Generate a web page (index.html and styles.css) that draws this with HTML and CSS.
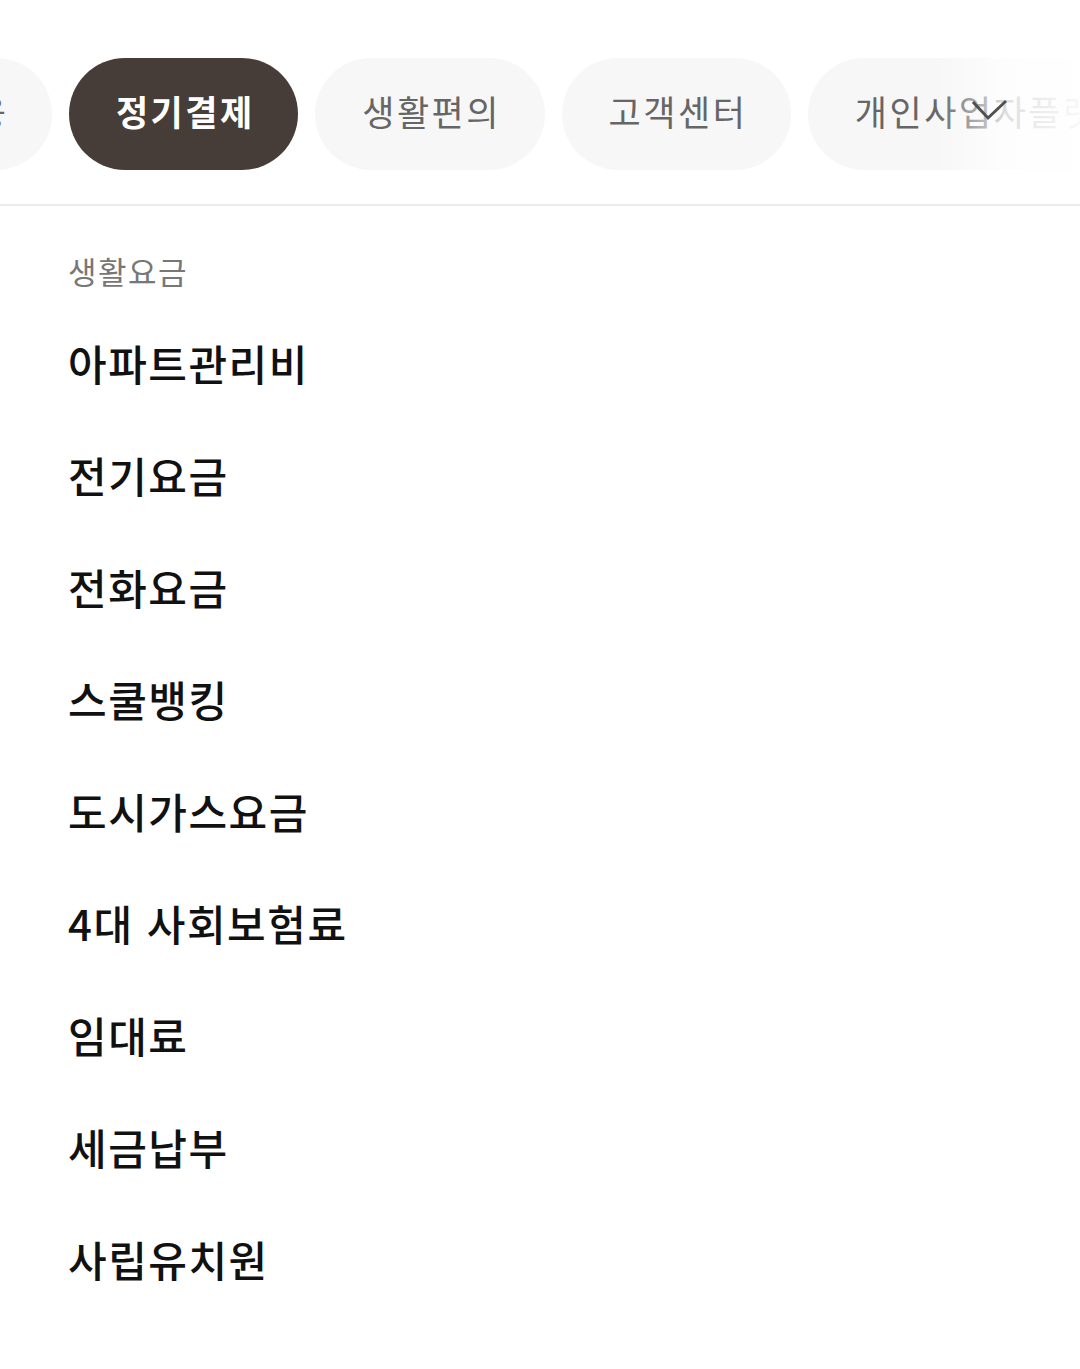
FILE: index.html
```html
<!DOCTYPE html>
<html lang="ko">
<head>
<meta charset="utf-8">
<link rel="stylesheet" href="styles.css">
</head>
<body>
<header class="tabbar">
  <nav class="tabs">
    <a class="tab tab-first">금융</a>
    <a class="tab tab-active">정기결제</a>
    <a class="tab">생활편의</a>
    <a class="tab">고객센터</a>
    <a class="tab">개인사업자플랫폼</a>
  </nav>
  <div class="fade">
    <svg class="chevron" width="48" height="36" viewBox="0 0 48 36">
      <polyline points="7,10 22,26 40,9" fill="none" stroke="#505050" stroke-width="3"/>
    </svg>
  </div>
</header>
<main class="content">
  <h2 class="section-label">생활요금</h2>
  <ul class="menu">
    <li>아파트관리비</li>
    <li>전기요금</li>
    <li>전화요금</li>
    <li>스쿨뱅킹</li>
    <li>도시가스요금</li>
    <li>4대 사회보험료</li>
    <li>임대료</li>
    <li>세금납부</li>
    <li>사립유치원</li>
  </ul>
</main>
</body>
</html>
```
FILE: styles.css
```css
html, body {
  margin: 0;
  padding: 0;
  background: #fff;
  font-family: "Noto Sans CJK KR", "Noto Sans", sans-serif;
}
.tabbar {
  position: relative;
  border-bottom: 2px solid #ececec;
  padding: 58px 0 34px;
  overflow: hidden;
}
.tabs {
  display: flex;
  gap: 17px;
  white-space: nowrap;
}
.tab {
  flex: none;
  box-sizing: border-box;
  height: 112px;
  padding: 0 43.5px 8px 47px;
  border-radius: 56px;
  background: #f7f7f7;
  color: #666;
  font-size: 35px;
  letter-spacing: 2.5px;
  font-weight: 400;
  display: flex;
  align-items: center;
  line-height: 1;
}
.tab-first {
  margin-left: -108px;
}
.tab-active {
  background: #473d38;
  color: #fff;
  font-weight: 700;
}
.fade {
  position: absolute;
  top: 58px;
  right: 0;
  width: 145px;
  height: 112px;
  background: linear-gradient(to right, rgba(255,255,255,0) 0%, rgba(255,255,255,0.8) 50%, rgba(255,255,255,0.96) 100%);
}
.chevron {
  position: absolute;
  left: 31px;
  top: 34px;
}
.content {
  padding: 45px 68px 0;
}
.section-label {
  margin: 0 0 18px;
  font-size: 31px;
  letter-spacing: 1.5px;
  line-height: 40px;
  font-weight: 400;
  color: #777;
}
.menu {
  list-style: none;
  margin: 0;
  padding: 0;
}
.menu li {
  box-sizing: border-box;
  height: 112px;
  padding-bottom: 6px;
  display: flex;
  align-items: center;
  font-size: 42px;
  letter-spacing: 1.5px;
  font-weight: 500;
  color: #111;
}
```
